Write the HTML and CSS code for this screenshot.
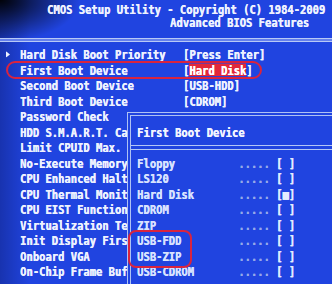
FILE: index.html
```html
<!DOCTYPE html>
<html>
<head>
<meta charset="utf-8">
<title>CMOS Setup Utility</title>
<link rel="stylesheet" href="styles.css">
</head>
<body>
<div class="screen">
  <header class="head">
    <div class="hline l1">CMOS Setup Utility - Copyright (C) 1984-2009</div>
    <div class="hline l2">Advanced BIOS Features</div>
  </header>
  <div class="rule"></div>
  <div class="menu">
    <div class="row"><span class="arrow"><svg width="4" height="5" viewBox="0 0 4 5"><polygon points="0,0 4,2.5 0,5" fill="#eef2ff"/></svg></span><span class="label">Hard Disk Boot Priority</span><span class="val">[Press Enter]</span></div>
    <div class="row"><span class="arrow"></span><span class="label">First Boot Device</span><span class="val">[<span class="hl">Hard Disk</span>]</span></div>
    <div class="row"><span class="arrow"></span><span class="label">Second Boot Device</span><span class="val">[USB-HDD]</span></div>
    <div class="row"><span class="arrow"></span><span class="label">Third Boot Device</span><span class="val">[CDROM]</span></div>
    <div class="row"><span class="arrow"></span><span class="label">Password Check</span></div>
    <div class="row"><span class="arrow"></span><span class="label">HDD S.M.A.R.T. Ca</span></div>
    <div class="row"><span class="arrow"></span><span class="label">Limit CPUID Max.</span></div>
    <div class="row"><span class="arrow"></span><span class="label">No-Execute Memory</span></div>
    <div class="row"><span class="arrow"></span><span class="label">CPU Enhanced Halt</span></div>
    <div class="row"><span class="arrow"></span><span class="label">CPU Thermal Monit</span></div>
    <div class="row"><span class="arrow"></span><span class="label">CPU EIST Function</span></div>
    <div class="row"><span class="arrow"></span><span class="label">Virtualization Te</span></div>
    <div class="row"><span class="arrow"></span><span class="label">Init Display Firs</span></div>
    <div class="row"><span class="arrow"></span><span class="label">Onboard VGA</span></div>
    <div class="row"><span class="arrow"></span><span class="label">On-Chip Frame Buf</span></div>
  </div>

  <div class="popup">
    <div class="prow ptitle">First Boot Device</div>
    <div class="psep"></div>
    <div class="prow"><span class="pname">Floppy</span><span class="pdots">.....</span><span class="pbox">[ ]</span></div>
    <div class="prow"><span class="pname">LS120</span><span class="pdots">.....</span><span class="pbox">[ ]</span></div>
    <div class="prow"><span class="pname">Hard Disk</span><span class="pdots">.....</span><span class="pbox">[■]</span></div>
    <div class="prow"><span class="pname">CDROM</span><span class="pdots">.....</span><span class="pbox">[ ]</span></div>
    <div class="prow"><span class="pname">ZIP</span><span class="pdots">.....</span><span class="pbox">[ ]</span></div>
    <div class="prow"><span class="pname">USB-FDD</span><span class="pdots">.....</span><span class="pbox">[ ]</span></div>
    <div class="prow"><span class="pname">USB-ZIP</span><span class="pdots">.....</span><span class="pbox">[ ]</span></div>
    <div class="prow"><span class="pname">USB-CDROM</span><span class="pdots">.....</span><span class="pbox">[ ]</span></div>
  </div>

  <div class="mark m1"></div>
  <div class="mark m2"></div>
</div>
</body>
</html>
```
FILE: styles.css
```css
* { box-sizing: border-box; margin: 0; padding: 0; }
html, body { width: 332px; height: 284px; overflow: hidden; background: #2044e0; }
body {
  font-family: "DejaVu Sans Mono", "Liberation Mono", monospace;
  font-weight: bold;
  font-size: 10.5px;
  color: #eef2ff;
  text-shadow: 0.35px 0 0 currentColor;
}
.screen {
  position: relative;
  width: 332px;
  height: 284px;
  overflow: hidden;
  background:
    radial-gradient(ellipse 80px 42px at 0 0, rgba(0,0,0,0.95), rgba(0,0,0,0) 100%),
    linear-gradient(90deg, rgba(0,0,30,0.25), rgba(0,0,0,0) 30px),
    #2044e0;
}
.head { padding-top: 3.5px; }
.hline {
  height: 10.5px;
  line-height: 10.5px;
  white-space: nowrap;
  transform: scaleY(1.2);
}
.l1 { padding-left: 47px; }
.l2 { padding-left: 170px; margin-top: 2.5px; }
.rule {
  margin-top: 11px;
  height: 4px;
  border-top: 1px solid #b8c9f6;
  border-bottom: 1px solid #b8c9f6;
  background: #6580ec;
}
.menu { padding-top: 5px; }
.row {
  display: flex;
  height: 15.5px;
  line-height: 15.5px;
  white-space: nowrap;
  transform: scaleY(1.25);
}
.arrow { width: 20px; padding-left: 6px; display: flex; align-items: center; }
.label { width: 163px; overflow: hidden; }
.hl {
  display: inline-block;
  height: 10px;
  line-height: 10px;
  background: #e2283a;
  color: #fff;
}
.popup {
  position: absolute;
  left: 127px;
  top: 112px;
  width: 215px;
  height: 190px;
  background: #2044e0;
  border: 1px solid #aec2f4;
  box-shadow: inset 0 0 0 2px #2044e0, inset 0 0 0 3px #aec2f4;
  padding: 11.5px 0 0 9px;
}
.prow {
  display: flex;
  height: 15.5px;
  line-height: 15.5px;
  white-space: pre;
  transform: scaleY(1.25);
  color: #d8e2ff;
}
.ptitle { color: #f2f5ff; }
.pname { width: 16ch; }
.pdots { width: 6ch; color: #96a9e8; }
.pbox { color: #e4ebff; }
.psep {
  height: 15.5px;
  margin-left: -6px;
  display: flex;
  align-items: center;
}
.psep::before {
  content: "";
  flex: 1;
  height: 3px;
  border-top: 1px solid #b4c6f6;
  border-bottom: 1px solid #b4c6f6;
}
.mark {
  position: absolute;
  border: 2px solid #d9243f;
  border-radius: 9px;
}
.m1 { left: 6px; top: 61px; width: 256px; height: 18px; }
.m2 { left: 128px; top: 230px; width: 64px; height: 38px; border-radius: 8px; }
```
